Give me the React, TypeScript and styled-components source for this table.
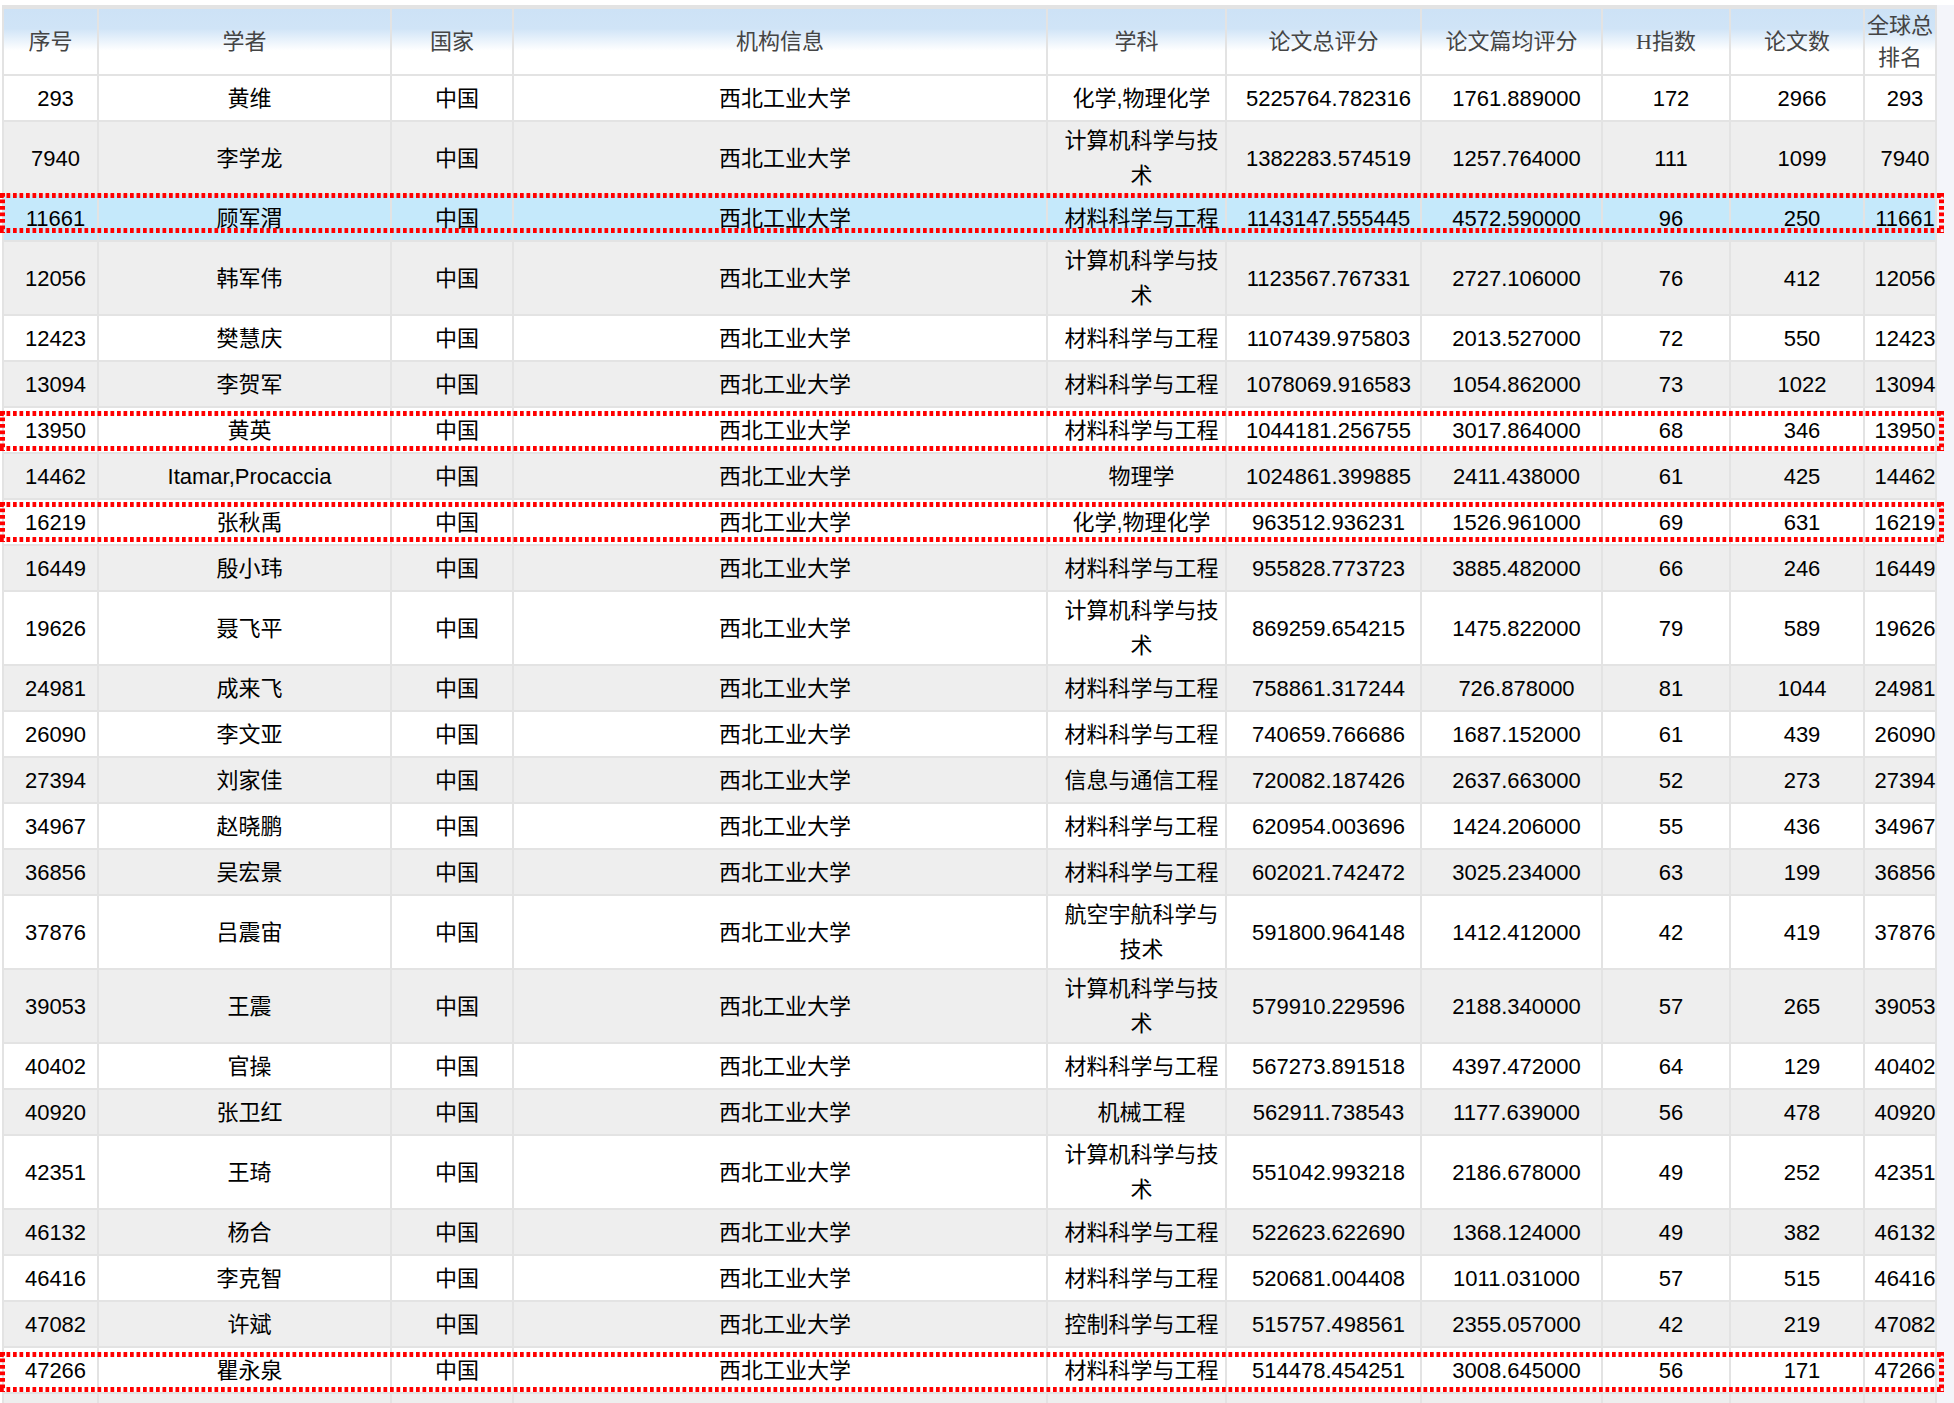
import React from "react";
import styled, { createGlobalStyle, css } from "styled-components";

const GlobalStyle = createGlobalStyle`
  html, body {
    margin: 0;
    padding: 0;
    background: #ffffff;
    overflow: hidden;
  }
  body {
    font-family: "Liberation Sans", "Noto Sans CJK SC", sans-serif;
  }
`;

const COLS = "93px 291px 120px 532px 177px 193px 179px 126px 132px 70px";

type Tone = "white" | "gray" | "blue";

const toneBg: Record<Tone, string> = {
  white: "#ffffff",
  gray: "#eeeeee",
  blue: "#c5e9fb",
};

const Page = styled.div`
  display: flex;
  align-items: flex-start;
  height: 1403px;
  overflow: hidden;
  padding-top: 5px;
  box-sizing: border-box;
`;

const Table = styled.div`
  flex: none;
  width: 1935px;
  margin-left: 2px;
  padding: 4px 2px 0;
  box-sizing: border-box;
  background: #e3e3e3;
  display: flex;
  flex-direction: column;
  gap: 2px;
`;

const Strip = styled.div`
  flex: 1;
  align-self: stretch;
  background: #f4f5fa;
`;

const dotted = css`
  background:
    linear-gradient(to right, #ff0000 4px, transparent 4px) top left / 6.5px 5px repeat-x,
    linear-gradient(to right, #ff0000 4px, transparent 4px) bottom left / 6.5px 5px repeat-x,
    linear-gradient(to bottom, #ff0000 4px, transparent 4px) top left / 5px 6.5px repeat-y,
    linear-gradient(to bottom, #ff0000 4px, transparent 4px) top right / 5px 6.5px repeat-y;
`;

const Row = styled.div<{ $mark?: number }>`
  display: grid;
  grid-template-columns: ${COLS};
  column-gap: 2px;
  position: relative;
  ${(p) =>
    p.$mark !== undefined &&
    css`
      &::after {
        content: "";
        position: absolute;
        left: -4px;
        right: -9px;
        top: ${p.$mark}px;
        height: 40px;
        pointer-events: none;
        z-index: 2;
        ${dotted}
      }
    `}
`;

const HeadCell = styled.div`
  min-height: 65px;
  padding: 0 2px;
  box-sizing: border-box;
  display: flex;
  align-items: center;
  justify-content: center;
  text-align: center;
  background: linear-gradient(
    to bottom,
    #cde2f6 0%,
    #d0e4f7 30%,
    #ffffff 64%,
    #ffffff 100%
  );
  font-family: "Liberation Serif", "Noto Sans CJK SC", serif;
  font-size: 22px;
  line-height: 32px;
  color: #444444;
`;

const Cell = styled.div<{ $tone: Tone }>`
  min-height: 44px;
  padding: 1px 0 1px 10px;
  box-sizing: border-box;
  display: flex;
  align-items: center;
  justify-content: center;
  text-align: center;
  background: ${(p) => toneBg[p.$tone]};
  font-size: 22px;
  line-height: 35px;
  color: #000000;
`;

const headers = [
  "序号",
  "学者",
  "国家",
  "机构信息",
  "学科",
  "论文总评分",
  "论文篇均评分",
  "H指数",
  "论文数",
  "全球总排名",
];

type Scholar = [string, string, string, string, string, string, string];

const rows: Scholar[] = [
  ["293", "黄维", "化学,物理化学", "5225764.782316", "1761.889000", "172", "2966"],
  ["7940", "李学龙", "计算机科学与技术", "1382283.574519", "1257.764000", "111", "1099"],
  ["11661", "顾军渭", "材料科学与工程", "1143147.555445", "4572.590000", "96", "250"],
  ["12056", "韩军伟", "计算机科学与技术", "1123567.767331", "2727.106000", "76", "412"],
  ["12423", "樊慧庆", "材料科学与工程", "1107439.975803", "2013.527000", "72", "550"],
  ["13094", "李贺军", "材料科学与工程", "1078069.916583", "1054.862000", "73", "1022"],
  ["13950", "黄英", "材料科学与工程", "1044181.256755", "3017.864000", "68", "346"],
  ["14462", "Itamar,Procaccia", "物理学", "1024861.399885", "2411.438000", "61", "425"],
  ["16219", "张秋禹", "化学,物理化学", "963512.936231", "1526.961000", "69", "631"],
  ["16449", "殷小玮", "材料科学与工程", "955828.773723", "3885.482000", "66", "246"],
  ["19626", "聂飞平", "计算机科学与技术", "869259.654215", "1475.822000", "79", "589"],
  ["24981", "成来飞", "材料科学与工程", "758861.317244", "726.878000", "81", "1044"],
  ["26090", "李文亚", "材料科学与工程", "740659.766686", "1687.152000", "61", "439"],
  ["27394", "刘家佳", "信息与通信工程", "720082.187426", "2637.663000", "52", "273"],
  ["34967", "赵晓鹏", "材料科学与工程", "620954.003696", "1424.206000", "55", "436"],
  ["36856", "吴宏景", "材料科学与工程", "602021.742472", "3025.234000", "63", "199"],
  ["37876", "吕震宙", "航空宇航科学与技术", "591800.964148", "1412.412000", "42", "419"],
  ["39053", "王震", "计算机科学与技术", "579910.229596", "2188.340000", "57", "265"],
  ["40402", "官操", "材料科学与工程", "567273.891518", "4397.472000", "64", "129"],
  ["40920", "张卫红", "机械工程", "562911.738543", "1177.639000", "56", "478"],
  ["42351", "王琦", "计算机科学与技术", "551042.993218", "2186.678000", "49", "252"],
  ["46132", "杨合", "材料科学与工程", "522623.622690", "1368.124000", "49", "382"],
  ["46416", "李克智", "材料科学与工程", "520681.004408", "1011.031000", "57", "515"],
  ["47082", "许斌", "控制科学与工程", "515757.498561", "2355.057000", "42", "219"],
  ["47266", "瞿永泉", "材料科学与工程", "514478.454251", "3008.645000", "56", "171"],
];

const marks: Record<number, number> = { 2: -3, 6: 3, 8: 2, 24: 4 };
const selectedIndex = 2;

export default function App() {
  return (
    <>
      <GlobalStyle />
      <Page>
        <Table>
          <Row>
            {headers.map((h) => (
              <HeadCell key={h}>{h}</HeadCell>
            ))}
          </Row>
          {rows.map((r, i) => {
            const tone: Tone = i === selectedIndex ? "blue" : i % 2 === 0 ? "white" : "gray";
            const [rank, name, subject, total, avg, h, papers] = r;
            return (
              <Row key={rank} $mark={marks[i]}>
                <Cell $tone={tone}>{rank}</Cell>
                <Cell $tone={tone}>{name}</Cell>
                <Cell $tone={tone}>中国</Cell>
                <Cell $tone={tone}>西北工业大学</Cell>
                <Cell $tone={tone}>{subject}</Cell>
                <Cell $tone={tone}>{total}</Cell>
                <Cell $tone={tone}>{avg}</Cell>
                <Cell $tone={tone}>{h}</Cell>
                <Cell $tone={tone}>{papers}</Cell>
                <Cell $tone={tone}>{rank}</Cell>
              </Row>
            );
          })}
          <Row>
            {headers.map((h) => (
              <Cell key={h} $tone="gray" />
            ))}
          </Row>
        </Table>
        <Strip />
      </Page>
    </>
  );
}
